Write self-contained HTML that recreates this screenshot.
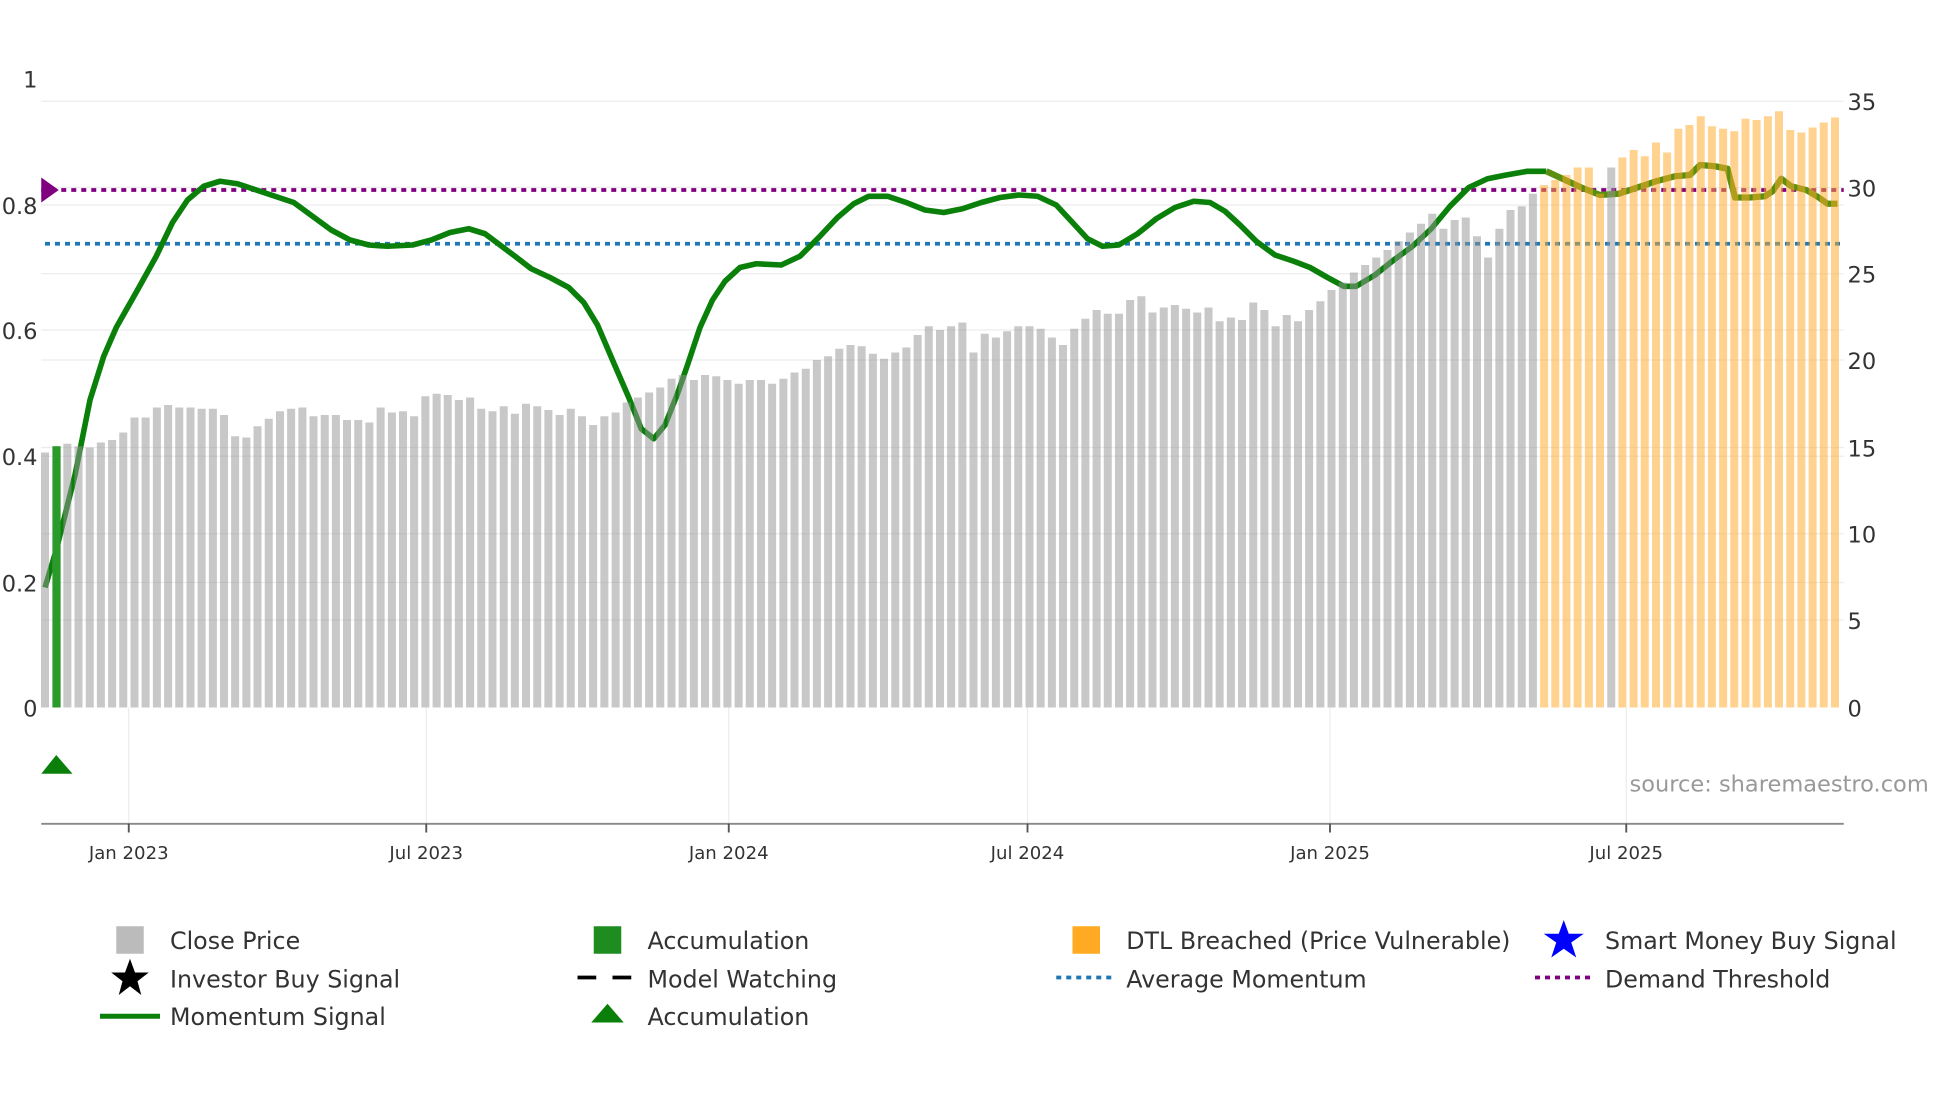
<!DOCTYPE html>
<html><head><meta charset="utf-8"><style>
html,body{margin:0;padding:0;background:#fff;}
svg{display:block;}
text{font-family:"DejaVu Sans","Liberation Sans",sans-serif;fill:#333;}
</style></head><body>
<svg id="s" width="1960" height="1102" viewBox="0 0 1568 881.6" xmlns="http://www.w3.org/2000/svg">
<g stroke="#ececf0" stroke-width="1">
<line x1="33" y1="81" x2="1475" y2="81"/><line x1="33" y1="150" x2="1475" y2="150"/>
<line x1="33" y1="219" x2="1475" y2="219"/><line x1="33" y1="288" x2="1475" y2="288"/>
<line x1="33" y1="358" x2="1475" y2="358"/><line x1="33" y1="427" x2="1475" y2="427"/>
<line x1="33" y1="496" x2="1475" y2="496"/><line x1="33" y1="164" x2="1475" y2="164"/>
<line x1="33" y1="264" x2="1475" y2="264"/><line x1="33" y1="365" x2="1475" y2="365"/>
<line x1="33" y1="466" x2="1475" y2="466"/>
<line x1="103" y1="566" x2="103" y2="659"/><line x1="341" y1="566" x2="341" y2="659"/>
<line x1="583" y1="566" x2="583" y2="659"/><line x1="822" y1="566" x2="822" y2="659"/>
<line x1="1064" y1="566" x2="1064" y2="659"/><line x1="1301" y1="566" x2="1301" y2="659"/>
</g>
<line x1="33" y1="152" x2="1475" y2="152" stroke="#800080" stroke-width="3" stroke-dasharray="4,4"/>
<line x1="36" y1="195" x2="1475" y2="195" stroke="#1f77b4" stroke-width="3" stroke-dasharray="4,4"/>
<path d="M33,142 L47,152 L33,162 Z" fill="#800080"/>
<path fill="none" stroke="#0a800a" stroke-width="4.5" stroke-linejoin="round" d="M36,470 L45,440 L60,380 L72,320 L83,285 L93,262 L110,232 L125,205 L138,178 L150,160 L163,149 L176,145 L190,147 L205,152 L220,157 L235,162 L250,173 L265,184 L280,192 L295,196 L310,197 L330,196 L345,192 L360,186 L375,183 L388,187 L400,196 L412,205 L425,215 L440,222 L455,230 L467,242 L478,260 L490,288 L503,318 L513,343 L523,351 L532,340 L542,315 L550,292 L560,262 L570,240 L580,225 L592,214 L605,211 L625,212 L640,205 L655,190 L670,174 L683,163 L695,157 L710,157 L725,162 L740,168 L755,170 L770,167 L785,162 L800,158 L815,156 L830,157 L845,164 L858,178 L870,191 L882,197 L895,196 L910,187 L925,175 L940,166 L955,161 L968,162 L980,169 L992,180 L1005,193 L1020,204 L1035,209 L1048,214 L1062,222 L1075,229 L1085,229 L1100,220 L1115,208 L1130,197 L1145,183 L1160,165 L1175,150 L1190,143 L1205,140 L1222,137 L1237,137"/>
<path fill="none" stroke="#5c8f10" stroke-width="5" stroke-linejoin="round" d="M1237,137 L1250,143 L1265,150 L1280,156 L1295,155 L1310,150 L1325,145 L1340,141 L1352,140 L1360,132 L1372,133 L1382,135 L1388,158 L1400,158 L1412,157 L1418,153 L1425,143 L1433,149 L1445,152 L1455,158 L1462,163 L1470,163"/>
<g id="bars"></g>
<rect x="42" y="357" width="6.5" height="209" fill="#2a9a2a"/>
<path d="M33,619 L45,604 L58,619 Z" fill="#0a800a"/>
<line x1="33" y1="659" x2="1475" y2="659" stroke="#888" stroke-width="1.5"/>
<g stroke="#555" stroke-width="1.5">
<line x1="103" y1="659" x2="103" y2="666"/><line x1="341" y1="659" x2="341" y2="666"/>
<line x1="583" y1="659" x2="583" y2="666"/><line x1="822" y1="659" x2="822" y2="666"/>
<line x1="1064" y1="659" x2="1064" y2="666"/><line x1="1301" y1="659" x2="1301" y2="666"/>
</g>
<g font-size="14.5" text-anchor="middle">
<text x="103" y="687">Jan 2023</text><text x="341" y="687">Jul 2023</text>
<text x="583" y="687">Jan 2024</text><text x="822" y="687">Jul 2024</text>
<text x="1064" y="687">Jan 2025</text><text x="1301" y="687">Jul 2025</text>
</g>
<g font-size="18" text-anchor="end">
<text x="30" y="70">1</text><text x="30" y="171">0.8</text><text x="30" y="271">0.6</text>
<text x="30" y="372">0.4</text><text x="30" y="473">0.2</text><text x="30" y="573">0</text>
</g>
<g font-size="18">
<text x="1478" y="88">35</text><text x="1478" y="157">30</text><text x="1478" y="226">25</text>
<text x="1478" y="295">20</text><text x="1478" y="365">15</text><text x="1478" y="434">10</text>
<text x="1478" y="503">5</text><text x="1478" y="573">0</text>
</g>
<text x="1543" y="633" font-size="18" text-anchor="end" style="fill:#999">source: sharemaestro.com</text>
<g font-size="19">
<rect x="93" y="741" width="22" height="22" fill="#bbb"/><text x="136" y="759">Close Price</text>
<path d="M104,767 L108,778 L119,778 L110,785 L113,796 L104,789 L95,796 L98,785 L89,778 L100,778 Z" fill="#000"/><text x="136" y="790">Investor Buy Signal</text>
<line x1="80" y1="813" x2="128" y2="813" stroke="#0a800a" stroke-width="4"/><text x="136" y="820">Momentum Signal</text>
<rect x="475" y="741" width="22" height="22" fill="#1e8c1e"/><text x="518" y="759">Accumulation</text>
<line x1="462" y1="782" x2="506" y2="782" stroke="#000" stroke-width="3" stroke-dasharray="15,13"/><text x="518" y="790">Model Watching</text>
<path d="M473,818 L486,803 L499,818 Z" fill="#0a800a"/><text x="518" y="820">Accumulation</text>
<rect x="858" y="741" width="22" height="22" fill="#ffaa22"/><text x="901" y="759">DTL Breached (Price Vulnerable)</text>
<line x1="845" y1="782" x2="889" y2="782" stroke="#1f77b4" stroke-width="3" stroke-dasharray="4,4"/><text x="901" y="790">Average Momentum</text>
<path d="M1251,736 L1255,747 L1267,747 L1257,754 L1261,766 L1251,759 L1241,766 L1245,754 L1235,747 L1247,747 Z" fill="#0000ff"/><text x="1284" y="759">Smart Money Buy Signal</text>
<line x1="1228" y1="782" x2="1272" y2="782" stroke="#800080" stroke-width="3" stroke-dasharray="4,4"/><text x="1284" y="790">Demand Threshold</text>
</g>
</svg>
<script>
var t=[362,357,355,357,358,354,352,346,334,334,326,324,326,326,327,327,332,349,350,341,335,329,327,326,333,332,332,336,336,338,326,330,329,333,317,315,316,320,318,327,329,325,331,323,325,328,332,327,333,340,333,330,322,318,314,310,303,300,304,300,301,304,307,304,304,307,303,298,295,288,285,279,276,277,283,287,282,278,268,261,264,261,258,282,267,270,265,261,261,263,270,276,263,255,248,251,251,240,237,250,246,244,247,250,246,257,254,256,242,248,261,252,257,248,241,232,226,218,212,206,200,193,186,179,171,183,176,174,189,206,183,168,165,155,148,144,140,134,134,155,134,126,120,125,114,122,103,100,93,101,103,105,95,96,93,89,104,106,102,98,94];
var n=t.length,x0=36,x1=1468,st=(x1-x0)/(n-1),h='';
for(var i=0;i<n;i++){var x=x0+i*st-3.2;var gray=(x<1225)||(i==n-21);
h+='<rect x="'+x.toFixed(1)+'" y="'+t[i]+'" width="6.4" height="'+(566-t[i])+'" fill="'+(gray?'rgba(150,150,150,0.52)':'rgba(255,170,40,0.52)')+'"/>';}
document.getElementById('bars').innerHTML=h;
</script>
</body></html>
